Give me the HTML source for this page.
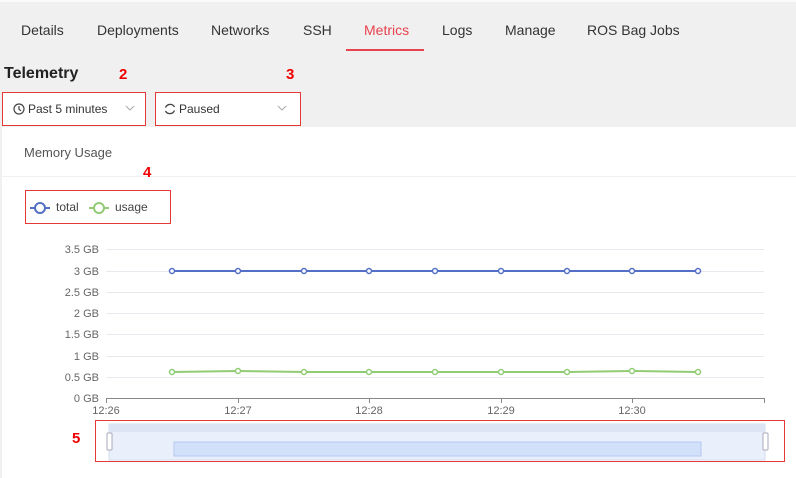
<!DOCTYPE html>
<html><head><meta charset="utf-8"><style>
body{margin:0;width:796px;height:478px;background:#f0f0f0;font-family:"Liberation Sans",sans-serif;position:relative;overflow:hidden}
.a{position:absolute;white-space:nowrap}
.tab{font-size:14px;color:#333;top:22px}
.box{position:absolute;background:#fff;border:1px solid #e53935;box-sizing:border-box}
</style></head><body>
<div class="a" style="left:0;top:0;width:796px;height:2px;background:#fafafa"></div>
<div class="a tab" style="left:21px">Details</div>
<div class="a tab" style="left:97px">Deployments</div>
<div class="a tab" style="left:211px">Networks</div>
<div class="a tab" style="left:303px">SSH</div>
<div class="a tab" style="left:364px;color:#e8424f">Metrics</div>
<div class="a" style="left:346px;top:49px;width:78px;height:2px;background:#e8424f"></div>
<div class="a tab" style="left:442px">Logs</div>
<div class="a tab" style="left:505px">Manage</div>
<div class="a tab" style="left:587px">ROS Bag Jobs</div>
<div class="a" style="left:4px;top:65px;font-size:16px;font-weight:bold;color:#222">Telemetry</div>
<div class="a" style="left:119px;top:66px;font-size:15px;font-weight:bold;color:#e00">2</div>
<div class="a" style="left:286px;top:66px;font-size:15px;font-weight:bold;color:#e00">3</div>
<div class="box" style="left:2px;top:92px;width:144px;height:34px"></div>
<svg class="a" style="left:13px;top:103px" width="12" height="12"><circle cx="6" cy="6" r="5" fill="none" stroke="#444" stroke-width="1.2"/><path d="M6 3v3.3l2 1.5" fill="none" stroke="#444" stroke-width="1.2"/></svg>
<div class="a" style="left:28px;top:102px;font-size:12px;color:#333">Past 5 minutes</div>
<svg class="a" style="left:125px;top:105px" width="10" height="7"><path d="M1 1l4 4 4-4" fill="none" stroke="#aaa"/></svg>
<div class="box" style="left:155px;top:92px;width:146px;height:34px"></div>
<svg class="a" style="left:164px;top:103px" width="12" height="12"><path d="M10.5 4A5 5 0 0 0 1.5 4.5M1.5 8A5 5 0 0 0 10.5 7.5" fill="none" stroke="#444" stroke-width="1.3"/></svg>
<div class="a" style="left:179px;top:102px;font-size:12px;color:#333">Paused</div>
<svg class="a" style="left:277px;top:105px" width="10" height="7"><path d="M1 1l4 4 4-4" fill="none" stroke="#aaa"/></svg>
<div class="a" style="left:2px;top:127px;width:794px;height:351px;background:#fff"></div>
<div class="a" style="left:2px;top:176px;width:794px;height:1px;background:#f0f0f0"></div>
<div class="a" style="left:24px;top:145px;font-size:13px;color:#555">Memory Usage</div>
<div class="a" style="left:143px;top:164px;font-size:15px;font-weight:bold;color:#e00">4</div>
<div class="box" style="left:25px;top:190px;width:146px;height:34px;background:none"></div>
<svg class="a" style="left:29px;top:200px" width="140" height="16"><path d="M1 8h20" stroke="#5470c6" stroke-width="2"/><circle cx="11" cy="8" r="5" fill="#fff" stroke="#5470c6" stroke-width="2"/><path d="M60 8h20" stroke="#91cc75" stroke-width="2"/><circle cx="70" cy="8" r="5" fill="#fff" stroke="#91cc75" stroke-width="2"/></svg>
<div class="a" style="left:56px;top:200px;font-size:12px;color:#444">total</div>
<div class="a" style="left:115px;top:200px;font-size:12px;color:#444">usage</div>
<svg class="a" style="left:0;top:230px" width="796" height="248" font-family="Liberation Sans" font-size="11" fill="#666">
<g stroke="#e8e8ee">
<path d="M106 19.5h658M106 41.5h658M106 62.5h658M106 83.5h658M106 104.5h658M106 126.5h658M106 147.5h658"/></g>
<path d="M106 168.5h658" stroke="#888"/>
<path d="M106.5 168v5M238.5 168v5M369.5 168v5M501.5 168v5M632.5 168v5M764.5 168v5" stroke="#888"/>
<g text-anchor="end">
<text x="99" y="23">3.5 GB</text><text x="99" y="45">3 GB</text><text x="99" y="66">2.5 GB</text><text x="99" y="87">2 GB</text><text x="99" y="108">1.5 GB</text><text x="99" y="130">1 GB</text><text x="99" y="151">0.5 GB</text><text x="99" y="172">0 GB</text></g>
<g text-anchor="middle"><text x="106" y="184">12:26</text><text x="238" y="184">12:27</text><text x="369" y="184">12:28</text><text x="501" y="184">12:29</text><text x="632" y="184">12:30</text></g>
<polyline points="172,41 238,41 304,41 369,41 435,41 501,41 567,41 632,41 698,41" fill="none" stroke="#5470c6" stroke-width="2"/>
<g fill="#fff" stroke="#5470c6" stroke-width="1.5"><circle cx="172" cy="41" r="2.5"/><circle cx="238" cy="41" r="2.5"/><circle cx="304" cy="41" r="2.5"/><circle cx="369" cy="41" r="2.5"/><circle cx="435" cy="41" r="2.5"/><circle cx="501" cy="41" r="2.5"/><circle cx="567" cy="41" r="2.5"/><circle cx="632" cy="41" r="2.5"/><circle cx="698" cy="41" r="2.5"/></g>
<polyline points="172,142 238,141 304,142 369,142 435,142 501,142 567,142 632,141 698,142" fill="none" stroke="#91cc75" stroke-width="2"/>
<g fill="#fff" stroke="#91cc75" stroke-width="1.5"><circle cx="172" cy="142" r="2.5"/><circle cx="238" cy="141" r="2.5"/><circle cx="304" cy="142" r="2.5"/><circle cx="369" cy="142" r="2.5"/><circle cx="435" cy="142" r="2.5"/><circle cx="501" cy="142" r="2.5"/><circle cx="567" cy="142" r="2.5"/><circle cx="632" cy="141" r="2.5"/><circle cx="698" cy="142" r="2.5"/></g>
<rect x="109" y="194" width="656" height="36" fill="#e9effb" stroke="#d3dcf0"/>
<rect x="109" y="194" width="656" height="8" fill="#dde4f3"/>
<rect x="174" y="212" width="527" height="14" fill="#d2e0f9" stroke="#b5c8f0"/>
<rect x="107" y="203" width="5" height="17" rx="1" fill="#fff" stroke="#aab"/>
<rect x="763" y="203" width="5" height="17" rx="1" fill="#fff" stroke="#aab"/>
</svg>
<div class="box" style="left:95px;top:420px;width:690px;height:42px;background:none"></div>
<div class="a" style="left:72px;top:430px;font-size:15px;font-weight:bold;color:#e00">5</div>
</body></html>
